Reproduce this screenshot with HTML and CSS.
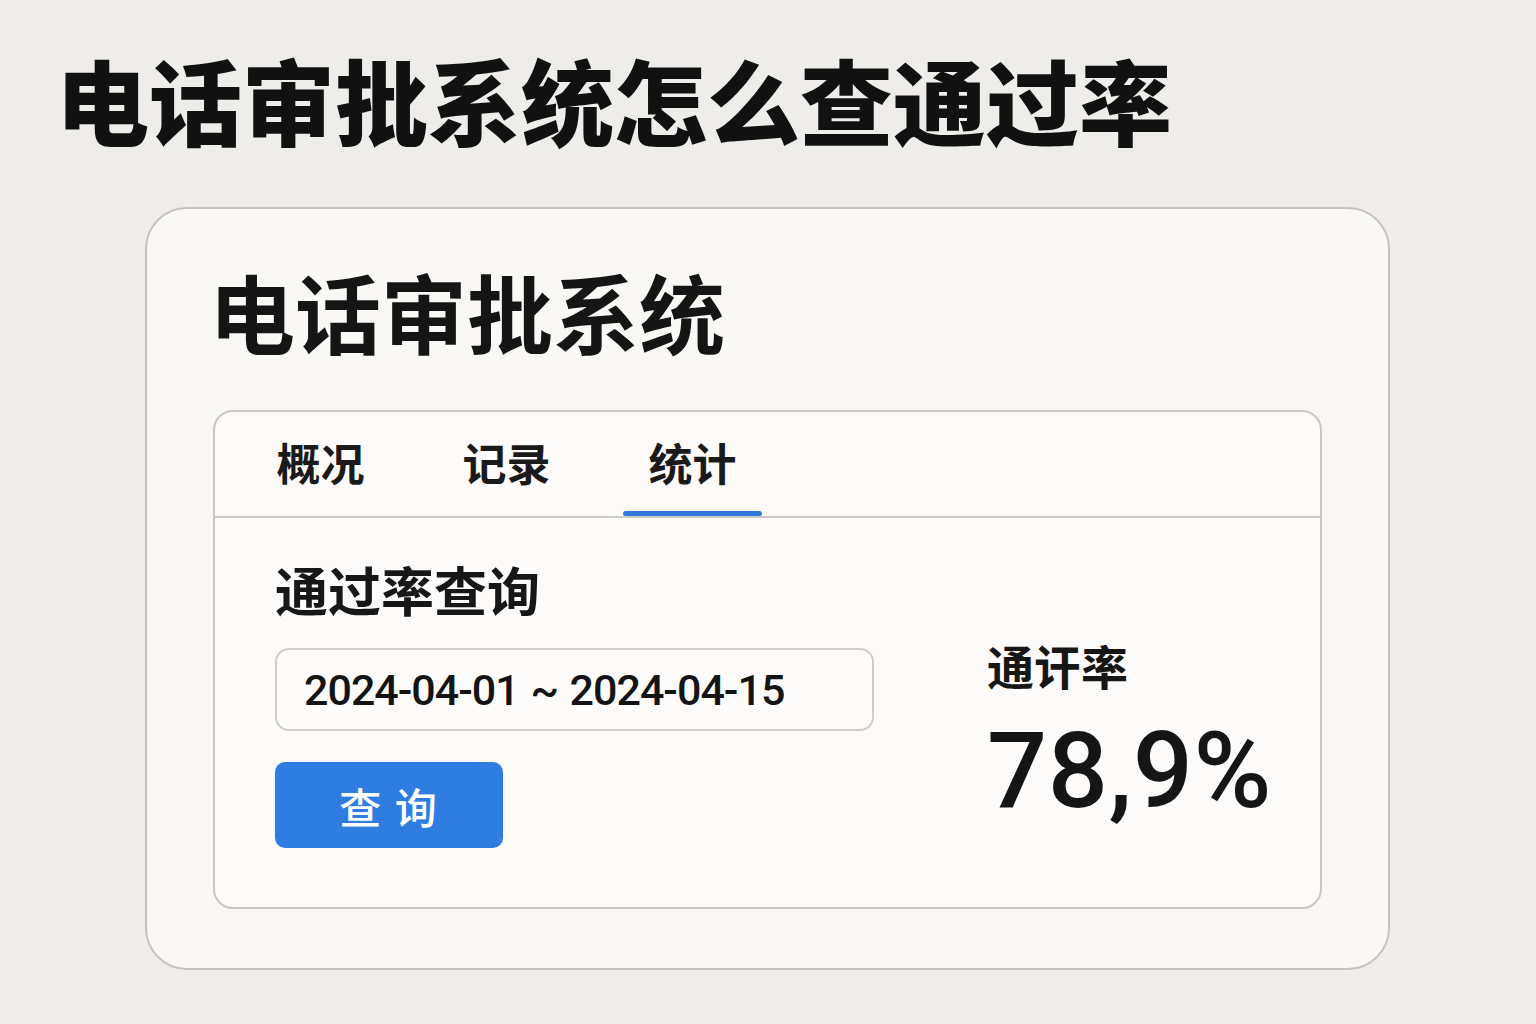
FILE: index.html
```html
<!DOCTYPE html>
<html lang="zh-CN">
<head>
<meta charset="utf-8">
<title>电话审批系统怎么查通过率</title>
<link rel="stylesheet" href="styles.css">
</head>
<body>
<h1 class="page-title">电话审批系统怎么查通过率</h1>
<div class="card">
  <h2 class="card-title">电话审批系统</h2>
  <div class="panel">
    <div class="tabs">
      <div class="tab">概况</div>
      <div class="tab">记录</div>
      <div class="tab active">统计</div>
    </div>
    <div class="content">
      <div class="query">
        <div class="query-title">通过率查询</div>
        <div class="date-input">2024-04-01 ~ 2024-04-15</div>
        <button class="btn">查 询</button>
      </div>
      <div class="result">
        <div class="result-label">通讦率</div>
        <div class="result-value">78,9%</div>
      </div>
    </div>
  </div>
</div>
</body>
</html>
```
FILE: styles.css
```css
* { box-sizing: border-box; }
html, body { margin: 0; padding: 0; }
body {
  width: 1536px;
  height: 1024px;
  overflow: hidden;
  background: #efede9;
  font-family: "Noto Sans CJK SC", "Noto Sans", sans-serif;
  color: #161616;
}
.page-title {
  margin: 0;
  padding: 49px 0 0 56px;
  font-size: 93px;
  line-height: 100px;
  font-weight: 900;
  letter-spacing: 0;
  color: #111;
}
.card {
  margin: 58px 0 0 145px;
  width: 1245px;
  height: 763px;
  border: 2px solid #c6c4c0;
  border-radius: 42px;
  background: #f9f8f5;
  padding: 54px 66px 0 66px;
}
.card-title {
  margin: 0 0 0 -4px;
  font-size: 86px;
  line-height: 96px;
  font-weight: 700;
  letter-spacing: 0;
  color: #151515;
}
.panel {
  margin-top: 51px;
  height: 499px;
  border: 2px solid #c9c7c3;
  border-radius: 20px;
  background: #fcfbf9;
  overflow: hidden;
}
.tabs {
  display: flex;
  gap: 47px;
  padding-left: 36px;
  height: 106px;
  border-bottom: 2px solid #cbc9c5;
}
.tab {
  width: 139px;
  display: flex;
  align-items: center;
  justify-content: center;
  font-size: 44px;
  font-weight: 700;
  color: #1a1a1a;
  position: relative;
  padding-bottom: 4px;
}
.tab.active::after {
  content: "";
  position: absolute;
  left: 0;
  right: 0;
  bottom: 0;
  height: 5px;
  border-radius: 3px;
  background: #2f79dd;
}
.content {
  display: flex;
  padding: 39px 0 0 60px;
}
.query {
  width: 598px;
  display: flex;
  flex-direction: column;
  align-items: flex-start;
}
.query-title {
  font-size: 53px;
  line-height: 64px;
  font-weight: 600;
  color: #171717;
}
.date-input {
  margin-top: 27px;
  width: 599px;
  height: 83px;
  border: 2px solid #cfcdc9;
  border-radius: 14px;
  background: #fdfcfb;
  padding-left: 27px;
  display: flex;
  align-items: center;
  font-family: "Roboto", "Inter", sans-serif;
  font-size: 43px;
  font-weight: 500;
  letter-spacing: -1px;
  word-spacing: 2px;
  color: #141414;
}
.btn {
  margin-top: 31px;
  width: 228px;
  height: 86px;
  border: none;
  border-radius: 10px;
  background: #2f7de1;
  color: #fff;
  font-family: "Noto Sans CJK SC", sans-serif;
  font-size: 42px;
  font-weight: 500;
  letter-spacing: 2px;
  padding: 0;
}
.result {
  margin-left: 114px;
  padding-top: 80px;
}
.result-label {
  font-size: 47px;
  line-height: 56px;
  font-weight: 600;
  color: #161616;
}
.result-value {
  margin-top: 26px;
  font-family: "Roboto", "Inter", sans-serif;
  font-size: 106px;
  line-height: 104px;
  font-weight: 500;
  letter-spacing: 0.5px;
  color: #151515;
}
```
